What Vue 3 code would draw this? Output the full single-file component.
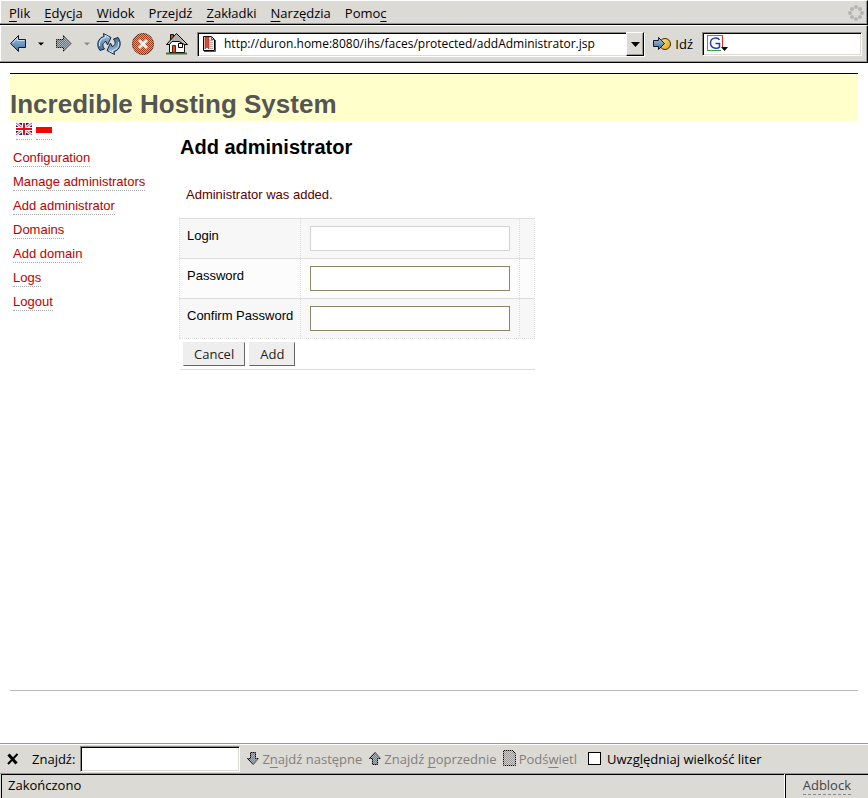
<script setup>
import { ref } from 'vue'

const menus = [
  { before: '', key: 'P', after: 'lik' },
  { before: '', key: 'E', after: 'dycja' },
  { before: '', key: 'W', after: 'idok' },
  { before: 'P', key: 'r', after: 'zejdź' },
  { before: '', key: 'Z', after: 'akładki' },
  { before: '', key: 'N', after: 'arzędzia' },
  { before: 'Pomo', key: 'c', after: '' },
]
const links = [
  'Configuration',
  'Manage administrators',
  'Add administrator',
  'Domains',
  'Add domain',
  'Logs',
  'Logout',
]
const fields = [
  { id: 'login', label: 'Login', type: 'text' },
  { id: 'password', label: 'Password', type: 'password' },
  { id: 'confirm', label: 'Confirm Password', type: 'password' },
]
const throbber = [
  [8, 2], [12, 4], [14, 8], [12, 12], [8, 14], [4, 12], [2, 8], [4, 4],
]
const address = ref('http://duron.home:8080/ihs/faces/protected/addAdministrator.jsp')
</script>

<template>
  <div class="window">
    <svg class="defs" width="0" height="0" aria-hidden="true">
      <defs>
        <pattern id="dither" width="2" height="2" patternUnits="userSpaceOnUse">
          <path d="M0 0h1v1h-1zM1 1h1v1h-1z" fill="#dcdad5" />
        </pattern>
        <linearGradient id="blue" x1="0" y1="0" x2="0" y2="1">
          <stop offset="0" stop-color="#a9c6e2" />
          <stop offset="1" stop-color="#3a6ea5" />
        </linearGradient>
        <linearGradient id="gold" x1="0" y1="0" x2="1" y2="1">
          <stop offset="0" stop-color="#ffe88a" />
          <stop offset="1" stop-color="#e0a010" />
        </linearGradient>
      </defs>
    </svg>

    <nav class="menubar">
      <button v-for="m in menus" :key="m.key" type="button" class="menu">{{ m.before }}<u>{{ m.key }}</u>{{ m.after }}</button>
      <svg class="throbber" width="16" height="16" viewBox="0 0 16 16">
        <circle v-for="(p, i) in throbber" :key="i" :cx="p[0]" :cy="p[1]" r="2" fill="#b4b4b2" />
      </svg>
    </nav>

    <div class="toolbar">
      <button type="button" class="tool back" aria-label="Wstecz">
        <svg width="18" height="18" viewBox="0 0 18 18">
          <path d="M1.500 8.500L9.500 0.500V4.500H16.500V12.500H9.500V16.500Z" fill="url(#blue)" stroke="#111a26" />
          <path d="M3.500 8L8.500 3V5.500H15.500" fill="none" stroke="#cfe2f3" />
        </svg>
      </button>
      <button type="button" class="tool drop" aria-label="Historia wstecz">
        <svg width="6" height="4" viewBox="0 0 6 4"><path d="M0 0.500H6L3 3.500Z" fill="#000" /></svg>
      </button>
      <button type="button" class="tool forward" aria-label="Naprzód" disabled>
        <svg width="18" height="18" viewBox="0 0 18 18">
          <path d="M16.500 8.500L8.500 0.500V4.500H1.500V12.500H8.500V16.500Z" fill="#5b7896" stroke="#111" />
          <path d="M18 8.500L8 0V4H1V13H8V18Z" fill="url(#dither)" opacity="0.6" />
        </svg>
      </button>
      <button type="button" class="tool drop" aria-label="Historia naprzód" disabled>
        <svg width="6" height="4" viewBox="0 0 6 4"><path d="M0 0.500H6L3 3.500Z" fill="#8c8b87" /></svg>
      </button>
      <button type="button" class="tool reload" aria-label="Odśwież">
        <svg width="24" height="22" viewBox="0 0 24 22">
          <g id="arc">
            <path d="M3 17.500C-1 12.500 0.500 5 7 3.500L6.500 0.500L14 4.500L10.500 12L9 8.500C5.500 9.500 5 12.500 7.500 16Z" fill="url(#blue)" stroke="#14273e" />
            <path d="M2.500 13C2 8 4.500 5.500 8.500 4.500L8.500 2.500L12 4.500" fill="none" stroke="#dcebf7" />
          </g>
          <use href="#arc" transform="rotate(180 12 11)" />
        </svg>
      </button>
      <button type="button" class="tool stop" aria-label="Zatrzymaj" disabled>
        <svg width="22" height="22" viewBox="0 0 22 22">
          <circle cx="11" cy="11" r="10.500" fill="#a8401c" stroke="#40201a" />
          <circle cx="11" cy="11" r="11" fill="url(#dither)" opacity="0.6" />
          <path d="M7 7L15 15M15 7L7 15" stroke="#f1eeea" stroke-width="3" />
        </svg>
      </button>
      <button type="button" class="tool home" aria-label="Strona startowa">
        <svg width="24" height="22" viewBox="0 0 24 22">
          <path d="M1 20.500H22" stroke="#3d7a2c" stroke-width="2" />
          <path d="M4.500 10V19.500H19.500V10L12 2Z" fill="#f8f8f6" stroke="#111" />
          <path d="M5.500 8V1.500H8.500V5" fill="#c94a2b" stroke="#111" />
          <path d="M1.500 11.500L11.500 0.500L22.500 11.500H19.500L14 8.500H7L4.500 11.500Z" fill="#c4c4c4" stroke="#000" />
          <path d="M10 3V8M12 2V8M14 4V8M16 6V9M8 5V8" stroke="#777" stroke-width="0.500" />
          <path d="M7.500 12.500H10.500V19.500H7.500Z" fill="#d7532f" stroke="#5b2114" />
          <path d="M13.500 10.500H17.500V14.500H13.500Z" fill="#fff" stroke="#000" />
        </svg>
      </button>

      <div class="address">
        <svg class="page-icon" width="14" height="16" viewBox="0 0 14 16">
          <path d="M1.500 0.500H9.500L12.500 3.500V14.500H1.500Z" fill="#eee" stroke="#000" />
          <path d="M3 1H7V13L5 11L3 13Z" fill="#e2482a" stroke="#7c1c0c" stroke-width="0.500" />
          <path d="M8 4.500H11M8 6.500H11M8 8.500H11M8 10.500H11M8 12.500H11" stroke="#aaa" />
          <path d="M9.500 0.500V3.500H12.500M2 15.500H13.500V4" fill="none" stroke="#555" />
        </svg>
        <input v-model="address" class="address-text" type="text" aria-label="Adres" />
        <button type="button" class="address-drop" aria-label="Pokaż historię">
          <svg width="9" height="5" viewBox="0 0 9 5"><path d="M0 0H9L4.500 5Z" fill="#000" /></svg>
        </button>
      </div>
      <button type="button" class="tool go">
        <svg width="19" height="16" viewBox="0 0 19 16">
          <circle cx="12" cy="8" r="5.500" fill="url(#gold)" stroke="#3b2a05" />
          <path d="M0.500 4.500H5.500V1.500L11.500 7.500L5.500 13.500V10.500H0.500Z" fill="url(#blue)" stroke="#111a26" />
        </svg>
        <span>Idź</span>
      </button>
      <div class="search">
        <svg width="22" height="18" viewBox="0 0 22 18">
          <path d="M0.500 16V0.500" stroke="#5a7be0" />
          <path d="M0 0.500H16M0 15.500H14" stroke="#36a53a" />
          <path d="M15.500 1V12" stroke="#e02a1c" />
          <path d="M12.500 5C11 2 3.500 2 3.500 8C3.500 14 11 14 12.500 12V8.500H8.500" fill="none" stroke="#1c3fc4" stroke-width="1.500" />
          <path d="M14 12H21L17.500 16Z" fill="#000" />
        </svg>
        <input class="search-text" type="text" aria-label="Szukaj" />
      </div>
    </div>

    <div class="page">
      <header class="banner"><h1>Incredible Hosting System</h1></header>
      <div class="columns">
        <nav class="side">
          <div class="flags">
            <a href="#en" aria-label="English">
              <svg width="16" height="12" viewBox="0 0 16 12">
                <path d="M0 0H16V12H0Z" fill="#1a1a8c" />
                <path d="M0 0L16 12M16 0L0 12" stroke="#fff" stroke-width="3" />
                <path d="M0 0L16 12M16 0L0 12" stroke="#e33" />
                <path d="M8 0V12M0 6H16" stroke="#fff" stroke-width="4" />
                <path d="M8 0V12M0 6H16" stroke="#f00818" stroke-width="2" />
              </svg>
            </a>
            <a href="#pl" aria-label="Polski">
              <svg width="16" height="12" viewBox="0 0 16 12">
                <path d="M0 0H16V4H0Z" fill="#fff" />
                <path d="M0 4H16V10H0Z" fill="#f00" />
              </svg>
            </a>
          </div>
          <ul>
            <li v-for="l in links" :key="l"><a href="#">{{ l }}</a></li>
          </ul>
        </nav>
        <main class="main">
          <h2>Add administrator</h2>
          <p class="message">Administrator was added.</p>
          <form class="form" @submit.prevent>
            <table>
              <tbody>
                <tr v-for="f in fields" :key="f.id">
                  <td class="label"><label :for="f.id">{{ f.label }}</label></td>
                  <td class="field"><input :id="f.id" :type="f.type" :class="{ plain: f.id === 'login' }" /></td>
                  <td class="note"></td>
                </tr>
              </tbody>
            </table>
            <div class="actions">
              <button type="button">Cancel</button>
              <button type="submit">Add</button>
            </div>
          </form>
        </main>
      </div>
      <footer class="foot"></footer>
    </div>

    <div class="findbar">
      <button type="button" class="tool close" aria-label="Zamknij">
        <svg width="12" height="12" viewBox="0 0 12 12">
          <path d="M1.500 1.500L9.500 10.500" stroke="#000" stroke-width="3" />
          <path d="M10.500 1L1 11" stroke="#000" stroke-width="2" />
        </svg>
      </button>
      <label class="find-label" for="find">Znajdź:</label>
      <input id="find" class="find-text" type="text" />
      <button type="button" class="tool find next" disabled>
        <svg width="14" height="14" viewBox="0 0 14 14">
          <path d="M4.500 0.500H9.500V6.500H12.500L7 12.500L1.500 6.500H4.500Z" fill="#6d88a5" stroke="#000" />
          <path d="M4 0H10V6H14L7 14L0 6H4Z" fill="url(#dither)" opacity="0.5" />
        </svg>
        <span>Z<u>n</u>ajdź następne</span>
      </button>
      <button type="button" class="tool find prev" disabled>
        <svg width="14" height="14" viewBox="0 0 14 14">
          <path d="M4.500 12.500H9.500V6.500H12.500L7 0.500L1.500 6.500H4.500Z" fill="#6d88a5" stroke="#000" />
          <path d="M4 13H10V7H14L7 0L0 7H4Z" fill="url(#dither)" opacity="0.5" />
        </svg>
        <span>Znajdź <u>p</u>oprzednie</span>
      </button>
      <button type="button" class="tool find mark" disabled>
        <svg width="14" height="17" viewBox="0 0 14 17">
          <path d="M0.500 0.500H9.500L12.500 4.500V15.500H0.500Z" fill="#999" stroke="#000" />
          <path d="M0 0H13V16H0Z" fill="url(#dither)" opacity="0.8" />
          <path d="M9.500 0.500L12.500 3.500" stroke="#000" />
        </svg>
        <span>Podś<u>w</u>ietl</span>
      </button>
      <label class="case"><input type="checkbox" /><span>Uwzg<u>l</u>ędniaj wielkość liter</span></label>
    </div>

    <div class="status">
      <span class="status-text">Zakończono</span>
      <span class="adblock"><span>Adblock</span></span>
    </div>
  </div>
</template>

<style>
body {
  background: #fff;
}
</style>

<style scoped>
* {
  box-sizing: border-box;
}
.window {
  display: flex;
  flex-direction: column;
  min-height: 100vh;
  font: 13px/18px "Open Sans", "Noto Sans", sans-serif;
  color: #000;
}
.defs {
  position: absolute;
}
button,
input {
  font: inherit;
  color: inherit;
  margin: 0;
  outline: 0;
}
u {
  text-underline-offset: 3px;
  text-decoration-skip-ink: none;
}
svg {
  display: block;
  flex: none;
}
.menubar,
.toolbar {
  display: flex;
  align-items: center;
  background: #dcdad5;
  border-top: 1px solid #fff;
  border-right: 1px solid #000;
  border-bottom: 1px solid #000;
  box-shadow: inset 0 -1px #9a9892, inset -1px 0 #9a9892, inset 1px 0 #fff;
}
.menubar {
  height: 25px;
  gap: 14px;
  padding: 0 3px 0 9px;
}
.menu {
  border: 0;
  padding: 0;
  background: none;
}
.throbber {
  margin-left: auto;
}
.toolbar {
  height: 38px;
  padding: 0 5px 0 9px;
}
.tool {
  display: flex;
  align-items: center;
  border: 0;
  padding: 0;
  background: none;
}
.drop {
  margin: 0 11px;
}
.drop + .reload {
  margin-left: -4px;
}
.stop {
  margin: 0 11px;
}
.address {
  flex: 1 1 448px;
  display: flex;
  align-items: center;
  min-width: 0;
  height: 25px;
  margin-left: 8px;
  background: #fff;
  border: 1px solid #8a8883;
  border-right-color: #fff;
  border-bottom-color: #fff;
  box-shadow: inset 1px 1px #000, inset -1px -1px #dcdad5;
}
.page-icon {
  margin-left: 4px;
}
.address-text,
.search-text {
  flex: 1;
  min-width: 0;
  border: 0;
  padding: 0;
  background: none;
}
.address-text {
  padding-left: 8px;
  font-size: 12px;
}
.address-drop {
  display: flex;
  align-items: center;
  justify-content: center;
  width: 18px;
  height: 24px;
  padding: 0;
  background: #dcdad5;
  border: 1px solid #fff;
  border-right-color: #000;
  border-bottom-color: #000;
  box-shadow: inset -1px -1px #9a9892;
}
.go {
  gap: 3px;
  margin: 0 9px 0 8px;
}
.search {
  flex: 0 1 160px;
  display: flex;
  align-items: center;
  min-width: 0;
  height: 24px;
  padding-left: 4px;
  background: #fff;
  border: 1px solid #8a8883;
  border-right-color: #fff;
  border-bottom-color: #fff;
  box-shadow: inset 1px 1px #000, inset -1px -1px #dcdad5;
}
.page {
  flex: 1;
  display: flex;
  flex-direction: column;
  padding: 10px 10px 52px;
  font: 13px/16px "Liberation Sans", sans-serif;
}
.banner {
  height: 48px;
  padding-top: 15px;
  background: #ffc;
  border-top: 1px solid #000;
}
h1 {
  margin: 0;
  font-size: 26px;
  line-height: 30px;
  color: #555;
}
.columns {
  flex: 1;
  display: flex;
}
.side {
  width: 170px;
  padding: 2px 3px;
}
.flags {
  display: flex;
  gap: 4px;
  padding-left: 3px;
}
.flags a {
  height: 17px;
  border-bottom: 1px dotted #aaa;
}
.side ul {
  margin: 10px 0 0;
  padding: 0;
  list-style: none;
}
.side li {
  height: 24px;
}
.side li a {
  display: inline-block;
  height: 17px;
  border-bottom: 1px dotted #aaa;
  color: #b00;
  text-decoration: none;
}
.main {
  padding-top: 14px;
}
h2 {
  margin: 0;
  font-size: 20px;
  line-height: 24px;
}
.message {
  margin: 28px 0 15px;
  padding-left: 6px;
  color: #500;
}
.form {
  border-bottom: 1px solid #ddd;
}
table {
  width: 356px;
  margin-left: -1px;
  border-spacing: 0;
  border-right: 1px dotted #ddd;
  border-bottom: 1px dotted #ddd;
}
td {
  height: 40px;
  padding: 0;
  vertical-align: top;
  border-top: 1px solid #ddd;
  border-left: 1px dotted #ddd;
}
tr:nth-child(odd) {
  background: #f7f7f7;
}
tr:nth-child(even) {
  background: #fcfcfc;
}
td.label {
  width: 121px;
  padding: 9px 0 0 7px;
}
td.field {
  padding: 7px 9px 0;
}
td.field input {
  display: block;
  width: 200px;
  height: 25px;
  padding: 0 4px;
  background: #fff;
  border: 1px solid #886;
}
td.field input.plain {
  border-color: #d4d4d4;
}
td.note {
  width: 15px;
}
.actions {
  display: flex;
  gap: 4px;
  padding: 3px;
}
.actions button {
  height: 24px;
  padding: 0 10px;
  font: 13px/18px "Open Sans", "Noto Sans", sans-serif;
  color: #222;
  background: #eee;
  border: 1px solid #eee;
  border-right-color: #666;
  border-bottom-color: #666;
}
.foot {
  border-top: 1px solid #bbb;
}
.findbar {
  display: flex;
  align-items: center;
  height: 30px;
  padding-left: 7px;
  background: #dcdad5;
  border-top: 1px solid #9a9892;
  box-shadow: inset 0 1px #fff;
}
.find-label {
  margin: 0 5px 0 13px;
}
.find-text {
  flex: 0 1 160px;
  min-width: 0;
  height: 26px;
  padding: 0 4px;
  background: #fff;
  border: 1px solid #8a8883;
  border-right-color: #fff;
  border-bottom-color: #fff;
  box-shadow: inset 1px 1px #000, inset -1px -1px #dcdad5;
}
.find {
  gap: 2px;
  color: #82807c;
  white-space: nowrap;
}
.next,
.prev,
.mark {
  margin-left: 6px;
}
.case {
  display: flex;
  align-items: center;
  gap: 6px;
  margin-left: 11px;
  white-space: nowrap;
}
.case input {
  appearance: none;
  width: 13px;
  height: 13px;
  background: #fff;
  border: 1px solid #000;
}
.status {
  display: flex;
  height: 25px;
  background: #dcdad5;
  border-top: 1px solid #9a9892;
}
.status-text {
  flex: 1;
  margin: 0 1px;
  padding: 1px 6px;
  border: solid #000;
  border-width: 1px 0 0 1px;
  box-shadow: 1px 0 #fff;
}
.adblock {
  padding: 1px 17px;
  border: solid #000;
  border-width: 1px 0 0 1px;
  color: #444;
}
.adblock span {
  display: block;
  height: 19px;
  border-bottom: 1px dashed #888;
}
</style>
